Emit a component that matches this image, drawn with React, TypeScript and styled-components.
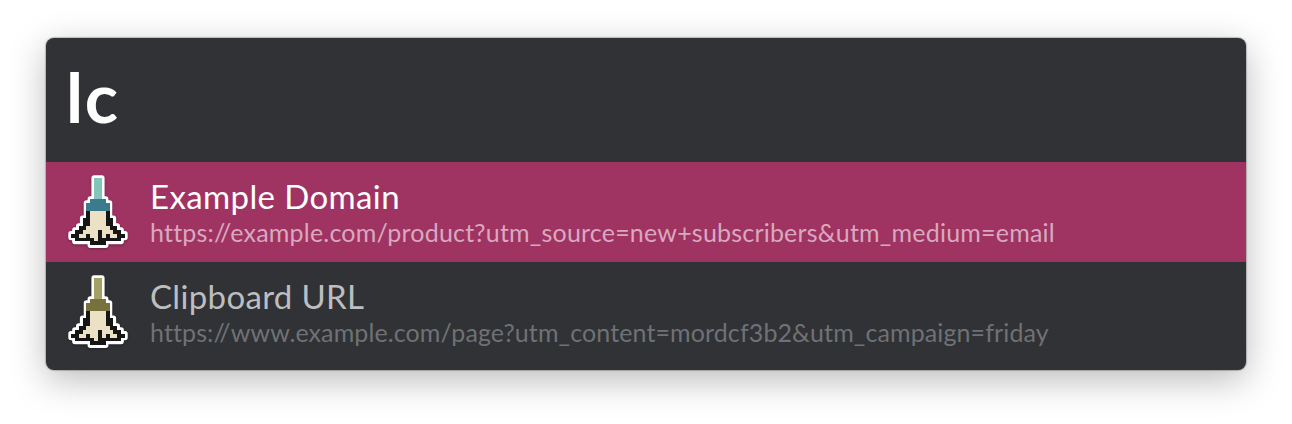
import React from 'react';
import styled, { createGlobalStyle } from 'styled-components';

const GlobalStyle = createGlobalStyle`
  * { box-sizing: border-box; }
  body { margin: 0; background: #fff; font-family: Lato, "Open Sans", sans-serif; }
`;

const Stage = styled.main`
  width: 1292px;
  height: 424px;
  padding: 38px 46px;
  overflow: hidden;
`;

const Launcher = styled.section`
  width: 1200px;
  height: 332px;
  border-radius: 8px;
  overflow: hidden;
  background: #303236;
  box-shadow: 0 0 1px 1px rgba(0, 0, 0, 0.22), 0 10px 36px rgba(0, 0, 0, 0.27);
`;

const Query = styled.div`
  height: 124px;
  padding: 15px 20px 0;
  font-size: 69px;
  line-height: 87px;
  font-weight: 700;
  letter-spacing: 1.5px;
  color: #fff;
`;

const Result = styled.div<{ $selected?: boolean }>`
  display: flex;
  height: 100px;
  padding-left: 20px;
  gap: 20px;
  color: ${(p) => (p.$selected ? '#fff' : '#bdbebf')};
  background: ${(p) => (p.$selected ? '#9f3362' : 'transparent')};
`;

const Icon = styled.svg`
  flex: none;
  width: 64px;
  height: 100px;
  filter: drop-shadow(0 1px 1px rgba(0, 0, 0, 0.35));
`;

const Copy = styled.div`
  display: flex;
  flex-direction: column;
  white-space: nowrap;
  padding-top: 14px;
`;

const Title = styled.div<{ $spacing: number }>`
  font-size: 33px;
  line-height: 40px;
  letter-spacing: ${(p) => p.$spacing}px;
`;

const Subtitle = styled.div<{ $selected?: boolean; $spacing: number }>`
  font-size: 25px;
  line-height: 32px;
  letter-spacing: ${(p) => p.$spacing}px;
  color: ${(p) => (p.$selected ? '#d9a8bf' : '#6f7174')};
`;

/* h: handle, c: collar, k: black edge, w: bristles */
const PIXELS = [
  '.....cccc.....',
  '....cccccc....',
  '....cccccc....',
  '....kwwwwk....',
  '....kwwwwk....',
  '...kkwwwwkk...',
  '...kkwwwwkk...',
  '..kkwwwwwwkk..',
  '.kkwwwwkwwwkk.',
  'kkwwkwwkwkwwkk',
  '.kkkkkwkkkkkk.',
  '.....kkkk.....',
];
const UNIT = 27 / 7;

function cells(match: (c: string) => boolean) {
  let d = 'M28.1 16h7.8v21h-7.8z'.repeat(match('h') ? 1 : 0);
  PIXELS.forEach((row, y) => {
    let x = 0;
    while (x < row.length) {
      if (!match(row[x])) {
        x += 1;
        continue;
      }
      const start = x;
      while (x < row.length && match(row[x])) x += 1;
      const width = (x - start) * UNIT;
      d += `M${5 + start * UNIT} ${37 + y * UNIT}h${width}v${UNIT}h${-width}z`;
    }
  });
  return d;
}

const SILHOUETTE = cells((c) => c !== '.');

function Broom({ handle, collar }: { handle: string; collar: string }) {
  return (
    <Icon viewBox="0 0 64 100" aria-hidden="true">
      <path d={SILHOUETTE} fill="#fff" stroke="#fff" strokeWidth="5.4" strokeLinejoin="round" />
      <g shapeRendering="crispEdges">
        <path d={cells((c) => c === 'h')} fill={handle} />
        <path d={cells((c) => c === 'c')} fill={collar} />
        <path d={cells((c) => c === 'w')} fill="#ece1c5" />
        <path d={cells((c) => c === 'k')} fill="#161616" />
      </g>
    </Icon>
  );
}

const results = [
  {
    title: 'Example Domain',
    url: 'https://example.com/product?utm_source=new+subscribers&utm_medium=email',
    handle: '#83c5bc', collar: '#3b7b8d', titleSpacing: 0.38, urlSpacing: 0.205, selected: true,
  },
  {
    title: 'Clipboard URL',
    url: 'https://www.example.com/page?utm_content=mordcf3b2&utm_campaign=friday',
    handle: '#a3a165', collar: '#77713e', titleSpacing: 0.33, urlSpacing: 0.11, selected: false,
  },
];

export default function App() {
  return (
    <Stage>
      <GlobalStyle />
      <Launcher>
        <Query>lc</Query>
        {results.map((r) => (
          <Result key={r.title} $selected={r.selected}>
            <Broom handle={r.handle} collar={r.collar} />
            <Copy>
              <Title $spacing={r.titleSpacing}>{r.title}</Title>
              <Subtitle $selected={r.selected} $spacing={r.urlSpacing}>{r.url}</Subtitle>
            </Copy>
          </Result>
        ))}
      </Launcher>
    </Stage>
  );
}
